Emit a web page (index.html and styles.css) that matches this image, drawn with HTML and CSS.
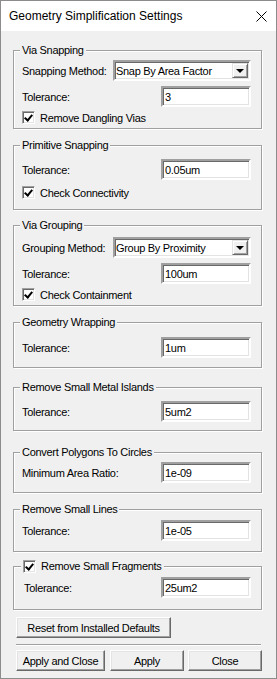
FILE: index.html
```html
<!DOCTYPE html>
<html lang="en">
<head>
    <meta charset="UTF-8">
    <title>Geometry Simplification Settings</title>
    <link rel="stylesheet" href="styles.css">
</head>
<body>
<div class="dialog">
    <div class="titlebar">
        <span class="title">Geometry Simplification Settings</span>
        <svg class="close-icon" width="11" height="11" viewBox="0 0 11 11">
            <path d="M0.5 0.5 L10.5 10.5 M10.5 0.5 L0.5 10.5" stroke="#000" stroke-width="1" fill="none"/>
        </svg>
    </div>

    <div class="content">
        <div class="group via-snapping">
            <span class="group-title">Via Snapping</span>
            <div class="row">
                <span class="label">Snapping Method:</span>
                <div class="combo">
                    <span class="combo-text">Snap By Area Factor</span>
                    <span class="combo-btn"><span class="arrow"></span></span>
                </div>
            </div>
            <div class="row">
                <span class="label">Tolerance:</span>
                <input class="field" type="text" value="3">
            </div>
            <label class="check-row">
                <span class="checkbox"></span>
                Remove Dangling Vias
            </label>
        </div>

        <div class="group primitive-snapping">
            <span class="group-title">Primitive Snapping</span>
            <div class="row">
                <span class="label">Tolerance:</span>
                <input class="field" type="text" value="0.05um">
            </div>
            <label class="check-row">
                <span class="checkbox"></span>
                Check Connectivity
            </label>
        </div>

        <div class="group via-grouping">
            <span class="group-title">Via Grouping</span>
            <div class="row">
                <span class="label">Grouping Method:</span>
                <div class="combo">
                    <span class="combo-text">Group By Proximity</span>
                    <span class="combo-btn"><span class="arrow"></span></span>
                </div>
            </div>
            <div class="row">
                <span class="label">Tolerance:</span>
                <input class="field" type="text" value="100um">
            </div>
            <label class="check-row">
                <span class="checkbox"></span>
                Check Containment
            </label>
        </div>

        <div class="group wrapping">
            <span class="group-title">Geometry Wrapping</span>
            <div class="row">
                <span class="label">Tolerance:</span>
                <input class="field" type="text" value="1um">
            </div>
        </div>

        <div class="group islands">
            <span class="group-title">Remove Small Metal Islands</span>
            <div class="row">
                <span class="label">Tolerance:</span>
                <input class="field" type="text" value="5um2">
            </div>
        </div>

        <div class="group circles">
            <span class="group-title">Convert Polygons To Circles</span>
            <div class="row">
                <span class="label">Minimum Area Ratio:</span>
                <input class="field" type="text" value="1e-09">
            </div>
        </div>

        <div class="group lines">
            <span class="group-title">Remove Small Lines</span>
            <div class="row">
                <span class="label">Tolerance:</span>
                <input class="field" type="text" value="1e-05">
            </div>
        </div>

        <div class="group fragments">
            <label class="group-title check-title">
                <span class="checkbox"></span>
                Remove Small Fragments
            </label>
            <div class="row">
                <span class="label">Tolerance:</span>
                <input class="field" type="text" value="25um2">
            </div>
        </div>

        <button class="btn reset" type="button">Reset from Installed Defaults</button>

        <div class="separator"></div>

        <div class="actions">
            <button class="btn apply-close" type="button">Apply and Close</button>
            <button class="btn apply" type="button">Apply</button>
            <button class="btn close" type="button">Close</button>
        </div>
    </div>
</div>
</body>
</html>
```

FILE: styles.css
```css
body {
    margin: 0;
    background-color: #f0f0f0;
    font-family: 'Liberation Sans', Arial, sans-serif;
    font-size: 11px;
    color: #000;
}

.dialog {
    width: 277px;
    height: 679px;
    box-sizing: border-box;
    border: 1px solid #8c8c8c;
    background-color: #f0f0f0;
}

.titlebar {
    display: flex;
    align-items: center;
    justify-content: space-between;
    height: 30px;
    padding: 0 9px 0 8px;
    background-color: #ffffff;
}

.title {
    font-size: 12px;
}

.close-icon {
    display: block;
}

.content {
    padding: 0 14px 0 12px;
}

/* Group boxes */
.group {
    border: 1px solid #a0a0a0;
    box-shadow: inset 1px 1px #ffffff, 1px 1px #ffffff;
    margin-top: 16px;
    padding: 0 10px 9px 8px;
}

.group-title {
    display: block;
    width: fit-content;
    height: 13px;
    line-height: 13px;
    margin: -7px 0 0 -2px;
    padding: 0 2px;
    background-color: #f0f0f0;
    letter-spacing: -0.3px;
}

.via-snapping {
    margin-top: 19px;
    padding-bottom: 4px;
}

.via-snapping .row:first-of-type {
    margin-top: 3px;
}

.primitive-snapping {
    padding-bottom: 10px;
}

.primitive-snapping .row {
    margin-top: 7px;
}

.primitive-snapping .check-row {
    margin-top: 6px;
}

.via-grouping {
    margin-top: 15px;
    padding-bottom: 4px;
}

.via-grouping .row:first-of-type {
    margin-top: 5px;
}

.wrapping .row {
    margin-top: 8px;
}

.islands {
    margin-top: 19px;
    padding-bottom: 8px;
}

.islands .row {
    margin-top: 7px;
}

.circles {
    margin-top: 21px;
}

.circles .row {
    margin-top: 3px;
}

.lines {
    padding-bottom: 10px;
}

.lines .row {
    margin-top: 4px;
}

.fragments {
    margin-top: 14px;
    padding-bottom: 11px;
}

.fragments .row {
    margin-top: 4px;
}

.fragments .row .label {
    padding-left: 2px;
}

.row {
    display: flex;
    align-items: center;
    justify-content: space-between;
    height: 21px;
    margin-top: 5px;
}

.label {
    letter-spacing: -0.3px;
}

/* Sunken edit box */
.field {
    width: 90px;
    height: 21px;
    box-sizing: border-box;
    margin: 0;
    padding: 0 3px 0 2px;
    border: 2px solid;
    border-color: #a0a0a0 #ffffff #ffffff #a0a0a0;
    box-shadow: inset 1px 1px #696969, inset -1px -1px #e3e3e3;
    background-color: #ffffff;
    font: inherit;
    letter-spacing: -0.3px;
    color: #000;
    outline: none;
}

/* Drop-down list */
.combo {
    display: flex;
    align-items: center;
    justify-content: space-between;
    width: 138px;
    height: 21px;
    box-sizing: border-box;
    border: 2px solid;
    border-color: #a0a0a0 #ffffff #ffffff #a0a0a0;
    box-shadow: inset 1px 1px #696969, inset -1px -1px #e3e3e3;
    background-color: #ffffff;
}

.combo-text {
    padding-left: 1px;
    letter-spacing: -0.3px;
}

.combo-btn {
    display: flex;
    align-items: center;
    justify-content: center;
    width: 16px;
    height: 15px;
    margin-right: 1px;
    box-sizing: border-box;
    border: 1px solid;
    border-color: #e3e3e3 #696969 #696969 #e3e3e3;
    box-shadow: inset 1px 1px #ffffff, inset -1px -1px #a0a0a0;
    background-color: #f0f0f0;
}

.arrow {
    width: 0;
    height: 0;
    border-left: 4px solid transparent;
    border-right: 4px solid transparent;
    border-top: 4px solid #000;
}

/* Check boxes */
.check-row {
    display: flex;
    align-items: center;
    gap: 5px;
    height: 13px;
    margin-top: 4px;
    letter-spacing: -0.3px;
}

.checkbox {
    position: relative;
    width: 13px;
    height: 13px;
    box-sizing: border-box;
    border: 1px solid;
    border-color: #a0a0a0 #ffffff #ffffff #a0a0a0;
    box-shadow: inset 1px 1px #696969, inset -1px -1px #e3e3e3;
    background-color: #ffffff;
    flex-shrink: 0;
}

.checkbox::after {
    content: "";
    position: absolute;
    left: 3px;
    top: 1px;
    width: 3px;
    height: 6px;
    border-right: 2px solid #000;
    border-bottom: 2px solid #000;
    transform: rotate(40deg);
}

.check-title {
    display: flex;
    align-items: center;
    gap: 5px;
    margin-left: -1px;
}

/* Buttons */
.btn {
    height: 21px;
    margin: 0;
    padding: 0;
    box-sizing: border-box;
    border: 1px solid;
    border-color: #ffffff #696969 #696969 #ffffff;
    box-shadow: inset -1px -1px #a0a0a0, inset 1px 1px #e3e3e3;
    background-color: #f0f0f0;
    font: inherit;
    letter-spacing: -0.3px;
    color: #000;
}

.reset {
    display: block;
    width: 155px;
    margin: 7px 0 0 3px;
}

.separator {
    margin: 6px 1px 0 3px;
    border-top: 1px solid #a0a0a0;
    border-bottom: 1px solid #ffffff;
}

.actions {
    display: flex;
    margin: 4px 0 0 3px;
}

.apply-close {
    width: 90px;
}

.apply {
    width: 75px;
    margin-left: 5px;
}

.close {
    width: 75px;
    margin-left: 4px;
}
```
